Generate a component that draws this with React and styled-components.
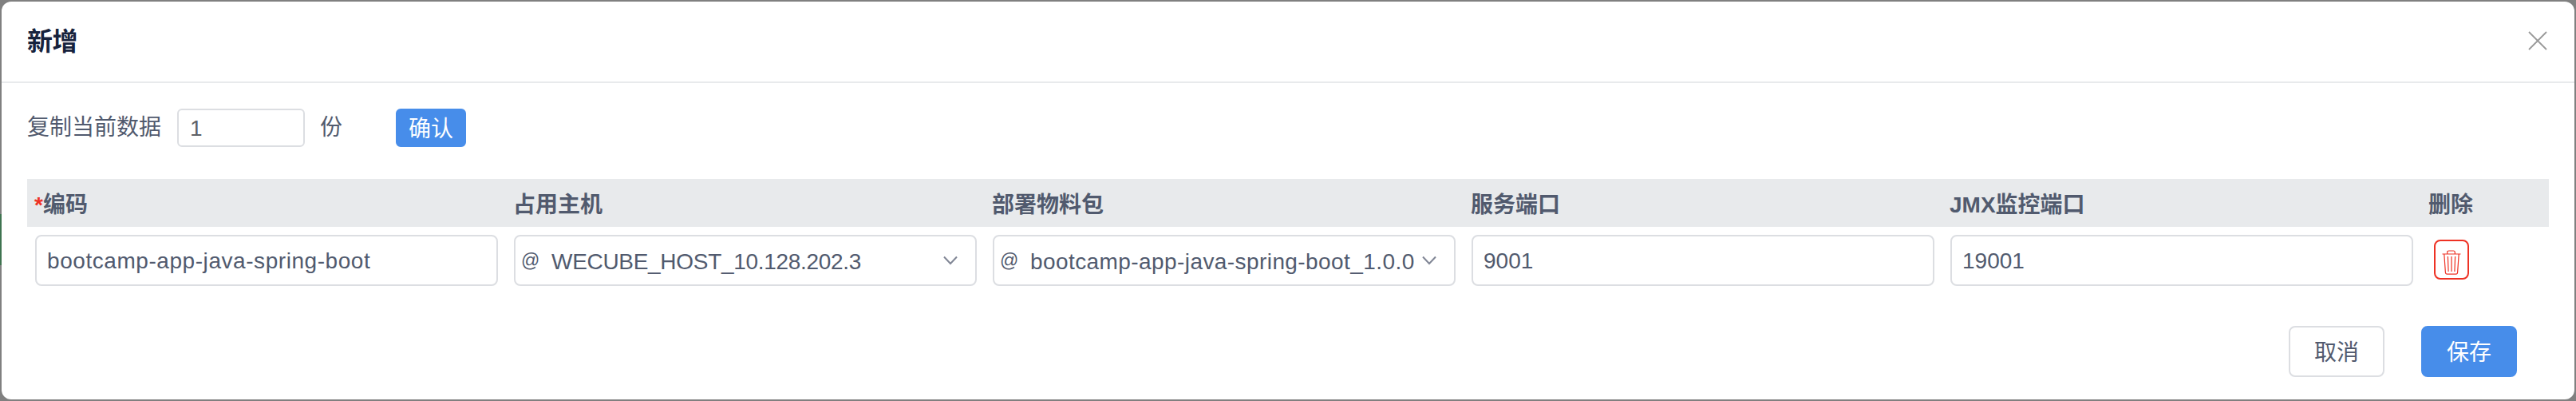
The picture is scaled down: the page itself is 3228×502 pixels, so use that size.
import React from "react";
import styled, { createGlobalStyle } from "styled-components";

const GlobalStyle = createGlobalStyle`
  *, *::before, *::after { box-sizing: border-box; }
  body {
    margin: 0;
    background: #808080;
    font-family: "Liberation Sans", "Noto Sans CJK SC", sans-serif;
    font-size: 28px;
    color: #515a6e;
  }
`;

const Backdrop = styled.div`
  width: 100%;
  height: 502px;
  padding: 2px;
  background: linear-gradient(#3f7350, #3f7350) 0 268px / 2px 64px no-repeat, #808080;
`;

const Dialog = styled.section`
  height: 498px;
  background: #fff;
  border-radius: 12px;
`;

const Header = styled.header`
  height: 102px;
  padding: 0 34px 2px 32px;
  display: flex;
  align-items: center;
  justify-content: space-between;
  border-bottom: 2px solid #e8eaec;
`;

const Title = styled.h2`
  margin: 0;
  padding-top: 1px;
  font-size: 32px;
  line-height: 40px;
  font-weight: 700;
  letter-spacing: -0.5px;
  color: #17233d;
`;

const CloseButton = styled.button`
  width: 24px;
  height: 24px;
  padding: 0;
  border: 0;
  background: none;
  color: #999;
  svg { display: block; }
`;

const CopyBar = styled.div`
  display: flex;
  align-items: center;
  height: 48px;
  margin: 32px 32px 40px;
`;

const CopyText = styled.span`
  line-height: 40px;
`;

const CountInput = styled.input`
  width: 160px;
  height: 48px;
  margin: 0 19px 0 20px;
  padding: 1px 14px 0;
  border: 2px solid #dcdee2;
  border-radius: 6px;
  background: #fff;
  color: #606266;
  font: inherit;
  outline: none;
`;

const Button = styled.button`
  width: ${(p) => (p.$small ? 88 : 120)}px;
  height: ${(p) => (p.$small ? 48 : 64)}px;
  margin-left: ${(p) => (p.$small ? 67 : 0)}px;
  padding: 3px 0 0;
  border: 2px solid ${(p) => (p.$primary ? "#478dea" : "#dcdee2")};
  border-radius: ${(p) => (p.$small ? 6 : 8)}px;
  background: ${(p) => (p.$primary ? "#478dea" : "#fff")};
  color: ${(p) => (p.$primary ? "#fff" : "#515a6e")};
  font: inherit;
  line-height: 40px;
`;

const Table = styled.div`
  margin: 0 32px;
`;

const Row = styled.div`
  display: grid;
  grid-template-columns: repeat(5, 600px) 1fr;
`;

const HeadRow = styled(Row)`
  height: 60px;
  align-items: center;
  background: #e8eaec;
  font-weight: 700;
`;

const HeadCell = styled.div`
  padding: 5px 10px 0 9px;
  line-height: 40px;
`;

const Required = styled.span`
  color: #ee3224;
`;

const Cell = styled.div`
  padding: 10px;
`;

const TextField = styled.input`
  display: block;
  width: 100%;
  height: 64px;
  padding: 1px 13px 0;
  border: 2px solid #dcdee2;
  border-radius: 8px;
  background: #fff;
  color: inherit;
  font: inherit;
  letter-spacing: ${(p) => p.$tracking || 0}px;
  outline: none;
`;

const SelectBox = styled.div`
  display: flex;
  align-items: center;
  height: 64px;
  padding: 0 22px 0 7px;
  border: 2px solid #dcdee2;
  border-radius: 8px;
`;

const AtSign = styled.span`
  width: 38px;
  padding-top: 1px;
  font-size: 23px;
`;

const SelectValue = styled.span`
  flex: 1;
  padding-top: 4px;
  white-space: nowrap;
  letter-spacing: ${(p) => p.$tracking}px;
`;

const Chevron = styled.svg`
  flex: none;
  width: 18px;
  height: 12px;
  color: #808695;
`;

const DeleteButton = styled.button`
  display: flex;
  justify-content: center;
  width: 44px;
  height: 50px;
  margin: 6px 0 0 6px;
  padding: 11px 0 0;
  border: 2px solid #ee3224;
  border-radius: 8px;
  background: #fff;
  color: #ee3224;
`;

const Footer = styled.footer`
  display: flex;
  justify-content: flex-end;
  gap: 46px;
  padding: 40px 72px 0;
`;

function Select({ value, tracking }) {
  return (
    <SelectBox>
      <AtSign>@</AtSign>
      <SelectValue $tracking={tracking}>{value}</SelectValue>
      <Chevron viewBox="0 0 18 12" fill="none" stroke="currentColor" strokeWidth="2">
        <path d="M1 1.5 9 10l8-8.5" />
      </Chevron>
    </SelectBox>
  );
}

export default function App() {
  return (
    <>
      <GlobalStyle />
      <Backdrop>
        <Dialog>
          <Header>
            <Title>新增</Title>
            <CloseButton aria-label="关闭">
              <svg width="24" height="24" viewBox="0 0 24 24" stroke="currentColor" strokeWidth="1.8">
                <path d="M1 1l22 22M23 1 1 23" />
              </svg>
            </CloseButton>
          </Header>
          <CopyBar>
            <CopyText>复制当前数据</CopyText>
            <CountInput defaultValue="1" />
            <CopyText>份</CopyText>
            <Button $primary $small>确认</Button>
          </CopyBar>
          <Table>
            <HeadRow>
              <HeadCell><Required>*</Required>编码</HeadCell>
              <HeadCell>占用主机</HeadCell>
              <HeadCell>部署物料包</HeadCell>
              <HeadCell>服务端口</HeadCell>
              <HeadCell>JMX监控端口</HeadCell>
              <HeadCell>删除</HeadCell>
            </HeadRow>
            <Row>
              <Cell><TextField $tracking={0.56} defaultValue="bootcamp-app-java-spring-boot" /></Cell>
              <Cell><Select value="WECUBE_HOST_10.128.202.3" tracking={-0.3} /></Cell>
              <Cell><Select value="bootcamp-app-java-spring-boot_1.0.0" tracking={0.42} /></Cell>
              <Cell><TextField defaultValue="9001" /></Cell>
              <Cell><TextField defaultValue="19001" /></Cell>
              <Cell>
                <DeleteButton aria-label="删除">
                  <svg width="24" height="32" viewBox="0 0 24 32" fill="none" stroke="currentColor" strokeWidth="1.2">
                    <path d="M.5 5h23M6.7 5V3q0-2 2-2h5.6q2 0 2 2v2M2.8 5l1.6 23q.2 2.2 2 2.2h11.2q1.8 0 2-2.2L21.2 5M7.4 8l.7 19M12 8v19M16.6 8l-.7 19" />
                  </svg>
                </DeleteButton>
              </Cell>
            </Row>
          </Table>
          <Footer>
            <Button>取消</Button>
            <Button $primary>保存</Button>
          </Footer>
        </Dialog>
      </Backdrop>
    </>
  );
}
